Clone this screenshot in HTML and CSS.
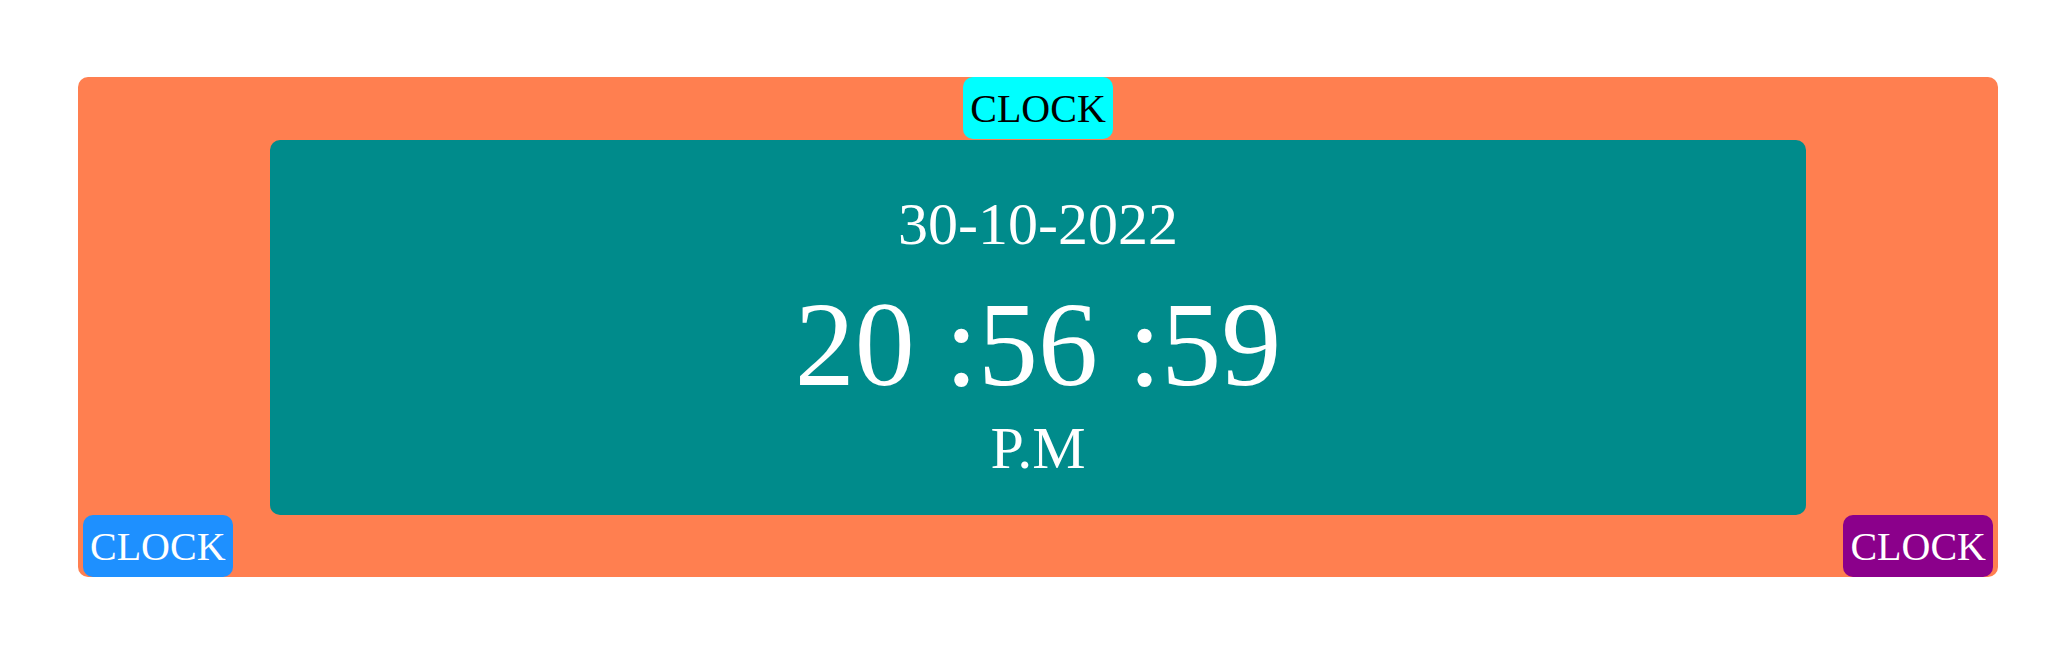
FILE: index.html
```html
<!DOCTYPE html>
<html lang="en">
<head>
  <meta charset="utf-8">
  <meta name="viewport" content="width=device-width, initial-scale=1">
  <title>Clock</title>
  <link rel="stylesheet" href="styles.css">
</head>
<body>
  <main class="clock">
    <div class="badge badge-top">CLOCK</div>
    <section class="face">
      <div class="date">30-10-2022</div>
      <div class="time">20 :56 :59</div>
      <div class="period">P.M</div>
    </section>
    <div class="footer">
      <div class="badge badge-left">CLOCK</div>
      <div class="badge badge-right">CLOCK</div>
    </div>
  </main>
</body>
</html>
```

FILE: styles.css
```css
body {
  margin: 0;
  padding: 77px 74px 77px 78px;
  background: white;
  color: white;
  font-family: "Liberation Serif", "Times New Roman", serif;
}

.clock {
  display: flex;
  flex-direction: column;
  align-items: center;
  background: coral;
  border-radius: 10px;
}

.badge {
  padding: 9px 7px 7px;
  border-radius: 10px;
  font-size: 40px;
  line-height: 46px;
}

.badge-top {
  margin-bottom: 1px;
  background: aqua;
  color: black;
}

.badge-left {
  background: dodgerblue;
}

.badge-right {
  background: darkmagenta;
}

.face {
  box-sizing: border-box;
  width: 80%;
  padding: 50px 0 32px;
  background: darkcyan;
  border-radius: 10px;
  text-align: center;
}

.date,
.period {
  font-size: 60px;
  line-height: 69px;
}

.date {
  margin-bottom: 17px;
}

.time {
  font-size: 120px;
  line-height: 138px;
}

.footer {
  display: flex;
  justify-content: space-between;
  align-self: stretch;
  padding: 0 5px;
}
```
